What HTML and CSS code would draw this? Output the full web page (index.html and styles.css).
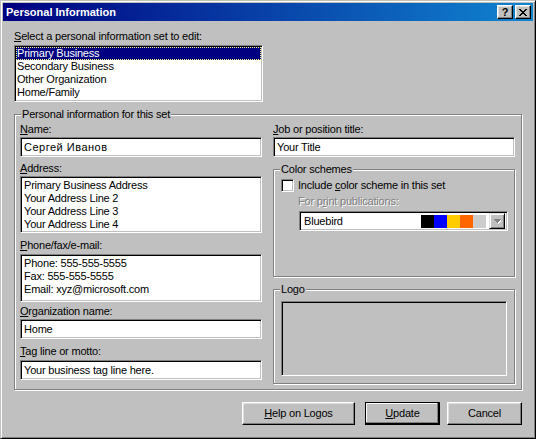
FILE: index.html
```html
<!DOCTYPE html>
<html>
<head>
<meta charset="utf-8">
<title>Personal Information</title>
<link rel="stylesheet" href="styles.css">
</head>
<body>
<div class="window">
  <div class="titlebar">
    <span class="title">Personal Information</span>
    <span class="tbtn help">?</span>
    <span class="tbtn close"><svg width="8" height="7" viewBox="0 0 8 7" shape-rendering="crispEdges"><path fill="#000" d="M0 0h2v1h-2z M6 0h2v1h-2z M1 1h2v1h-2z M5 1h2v1h-2z M2 2h4v1h-4z M3 3h2v1h-2z M2 4h4v1h-4z M1 5h2v1h-2z M5 5h2v1h-2z M0 6h2v1h-2z M6 6h2v1h-2z"/></svg></span>
  </div>
  <div class="body">
    <div class="lbl"><u>S</u>elect a personal information set to edit:</div>
    <div class="listbox">
      <div class="item selected">Primary Business</div>
      <div class="item">Secondary Business</div>
      <div class="item">Other Organization</div>
      <div class="item">Home/Family</div>
    </div>
    <div class="group main">
      <span class="legend">Personal information for this set</span>
      <div class="cols">
        <div class="col">
          <div class="lbl"><u>N</u>ame:</div>
          <div class="field name cyr">Сергей Иванов</div>
          <div class="lbl l-addr"><u>A</u>ddress:</div>
          <div class="field multi addr">
            <div>Primary Business Address</div>
            <div>Your Address Line 2</div>
            <div>Your Address Line 3</div>
            <div>Your Address Line 4</div>
          </div>
          <div class="lbl l-phone"><u>P</u>hone/fax/e-mail:</div>
          <div class="field multi phone">
            <div>Phone: 555-555-5555</div>
            <div>Fax: 555-555-5555</div>
            <div>Email: xyz@microsoft.com</div>
          </div>
          <div class="lbl l-org"><u>O</u>rganization name:</div>
          <div class="field org">Home</div>
          <div class="lbl l-tag"><u>T</u>ag line or motto:</div>
          <div class="field tag">Your business tag line here.</div>
        </div>
        <div class="col">
          <div class="lbl"><u>J</u>ob or position title:</div>
          <div class="field name">Your Title</div>
          <div class="group colors">
            <span class="legend">Color schemes</span>
            <div class="check-row">
              <span class="checkbox"></span>
              <span>Include <u>c</u>olor scheme in this set</span>
            </div>
            <div class="disabled">For p<u>r</u>int publications:</div>
            <div class="combo">
              <span class="combo-text">Bluebird</span>
              <span class="swatches">
                <span class="sw" style="background:#000000"></span>
                <span class="sw" style="background:#0000ff"></span>
                <span class="sw" style="background:#ffcc00"></span>
                <span class="sw" style="background:#ff6600"></span>
                <span class="sw" style="background:#cccccc"></span>
              </span>
              <span class="drop"><svg width="7" height="5" viewBox="0 0 7 5" shape-rendering="crispEdges"><path fill="#ffffff" d="M1 1h7v1h-1v1h-1v1h-1v1h-1v-1h-1v-1h-1v-1h-1z"/><path fill="#808080" d="M0 0h7v1h-1v1h-1v1h-1v1h-1v-1h-1v-1h-1v-1h-1z"/></svg></span>
            </div>
          </div>
          <div class="group logo">
            <span class="legend">Logo</span>
            <div class="logo-box"></div>
          </div>
        </div>
      </div>
    </div>
    <div class="buttons">
      <div class="btn help-btn"><span><u>H</u>elp on Logos</span></div>
      <div class="btn default"><span><u>U</u>pdate</span></div>
      <div class="btn cancel"><span>Cancel</span></div>
    </div>
  </div>
</div>
</body>
</html>
```

FILE: styles.css
```css
* { box-sizing: border-box; }
html, body { margin: 0; padding: 0; }
body {
  width: 536px;
  height: 439px;
  overflow: hidden;
  background: #c0c0c0;
  font-family: "Liberation Sans", Arial, sans-serif;
  font-size: 11px;
  line-height: 13px;
  letter-spacing: -0.2px;
  color: #000;
}
u { text-decoration: underline; text-underline-offset: 1px; }

.window {
  width: 536px;
  height: 439px;
  background: #c0c0c0;
  border: 1px solid;
  border-color: #c0c0c0 #000 #000 #c0c0c0;
  box-shadow: inset 1px 1px #fff, inset -1px -1px #808080;
  padding: 2px;
  display: flex;
  flex-direction: column;
}

.titlebar {
  height: 18px;
  background: linear-gradient(to right, #000080, #1084d0);
  display: flex;
  align-items: center;
  padding-left: 3px;
  padding-right: 2px;
}
.title {
  color: #fff;
  font-weight: bold;
  font-size: 11px;
  letter-spacing: 0;
  flex: 1;
}
.tbtn {
  width: 16px;
  height: 14px;
  background: #c0c0c0;
  border: 1px solid;
  border-color: #fff #000 #000 #fff;
  box-shadow: inset -1px -1px #808080, inset 1px 1px #dfdfdf;
  display: flex;
  align-items: center;
  justify-content: center;
}
.tbtn.help {
  font-weight: bold;
  font-size: 11px;
  line-height: 12px;
  margin-right: 2px;
}
.tbtn.close svg { display: block; }

.body {
  flex: 1;
  padding: 9px 11px 0 11px;
  display: flex;
  flex-direction: column;
}

.lbl { height: 13px; white-space: nowrap; }

.listbox, .field, .checkbox, .combo {
  background: #fff;
  border: 1px solid;
  border-color: #808080 #fff #fff #808080;
  box-shadow: inset 1px 1px #000, inset -1px -1px #c0c0c0;
}
.listbox {
  margin-top: 2px;
  width: 249px;
  height: 57px;
  padding: 1px;
}
.item {
  height: 13px;
  padding-left: 1px;
  white-space: nowrap;
}
.item.selected {
  background: #000080;
  color: #fff;
  outline: 1px dotted #ffff80;
  outline-offset: -1px;
}

.group {
  position: relative;
  border: 1px solid #808080;
  box-shadow: inset 1px 1px #fff, 1px 1px #fff;
}
.legend {
  position: absolute;
  top: -7px;
  left: 6px;
  padding: 0 1px;
  height: 13px;
  background: #c0c0c0;
  white-space: nowrap;
}
.group.main {
  margin-top: 12px;
  width: 508px;
  height: 276px;
  padding: 8px 5px 0 5px;
}
.cols {
  display: grid;
  grid-template-columns: 242px 242px;
  column-gap: 11px;
}
.col { display: flex; flex-direction: column; }

.field {
  margin-top: 1px;
  height: 20px;
  padding: 0 2px 0 3px;
  display: flex;
  align-items: center;
  white-space: nowrap;
}
.field.cyr { letter-spacing: 0.5px; }
.field.multi {
  display: block;
  padding: 2px 2px 2px 3px;
}
.field.addr { height: 57px; }
.l-addr { margin-top: 5px; }
.l-phone { margin-top: 6px; }
.field.phone { margin-top: 2px; height: 48px; }
.l-org { margin-top: 3px; }
.l-tag { margin-top: 6px; }
.field.tag { margin-top: 2px; }

.group.colors {
  margin-top: 12px;
  height: 108px;
  padding: 9px 7px 0 7px;
}
.check-row {
  display: flex;
  align-items: center;
  height: 13px;
  gap: 4px;
}
.checkbox {
  width: 13px;
  height: 13px;
  flex: none;
}
.disabled {
  margin-top: 3px;
  margin-left: 17px;
  height: 13px;
  color: #808080;
  text-shadow: 1px 1px #fff;
  white-space: nowrap;
}
.combo {
  margin-top: 3px;
  margin-left: 18px;
  width: 209px;
  height: 20px;
  padding: 2px 2px;
  display: flex;
  align-items: center;
}
.combo-text {
  flex: 1;
  padding-left: 2px;
}
.swatches {
  display: flex;
  height: 13px;
  margin-right: 3px;
}
.sw { width: 13px; height: 13px; }
.drop {
  width: 16px;
  height: 16px;
  background: #c0c0c0;
  border: 1px solid;
  border-color: #dfdfdf #000 #000 #dfdfdf;
  box-shadow: inset 1px 1px #fff, inset -1px -1px #808080;
  display: flex;
  align-items: center;
  justify-content: center;
}
.drop svg { display: block; }

.group.logo {
  margin-top: 12px;
  height: 95px;
  padding: 11px 7px 0 7px;
}
.logo-box {
  width: 226px;
  height: 75px;
  border: 1px solid;
  border-color: #808080 #fff #fff #808080;
  box-shadow: inset 1px 1px #000, inset -1px -1px #c0c0c0;
}

.buttons {
  margin-top: 12px;
  width: 508px;
  display: flex;
  justify-content: flex-end;
}
.btn {
  height: 23px;
  width: 75px;
  background: #c0c0c0;
  border: 1px solid;
  border-color: #fff #000 #000 #fff;
  box-shadow: inset -1px -1px #808080, inset 1px 1px #dfdfdf;
  display: flex;
  align-items: center;
  justify-content: center;
  white-space: nowrap;
}
.btn.help-btn { width: 113px; margin-right: 10px; }
.btn.default {
  margin-right: 7px;
  border-color: #000;
  box-shadow: inset -1px -1px #000, inset -2px -2px #808080, inset 1px 1px #fff;
}
```
